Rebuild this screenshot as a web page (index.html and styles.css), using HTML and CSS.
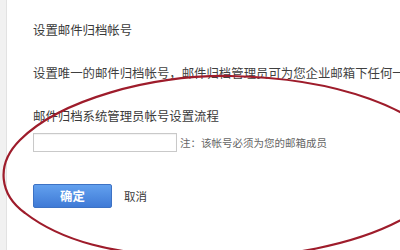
FILE: index.html
```html
<!DOCTYPE html>
<html lang="zh-CN">
<head>
<meta charset="utf-8">
<title>设置邮件归档帐号</title>
<link rel="stylesheet" href="styles.css">
</head>
<body>
<div class="page">
  <div class="rail"></div>
  <main class="content">
    <h2 class="title">设置邮件归档帐号</h2>
    <p class="desc">设置唯一的邮件归档帐号，邮件归档管理员可为您企业邮箱下任何一个成员设置归档</p>
    <h3 class="section">邮件归档系统管理员帐号设置流程</h3>
    <div class="field">
      <input class="account" type="text">
      <span class="note">注：该帐号必须为您的邮箱成员</span>
    </div>
    <div class="actions">
      <button class="btn-primary" type="button">确定</button>
      <a class="cancel" href="#">取消</a>
    </div>
  </main>
</div>
<svg class="annotation" width="400" height="250" viewBox="0 0 400 250">
  <path d="M 445,150 C 420,110 340,78 230,76 C 150,75 60,100 20,140 C -5,165 0,195 25,213 C 60,240 110,255 200,258 C 280,260 360,245 410,215 C 450,190 460,165 445,150 Z" fill="none" stroke="#9e1c2b" stroke-width="2.2" stroke-linecap="round"/>
</svg>
</body>
</html>
```

FILE: styles.css
```css
html, body {
  margin: 0;
  padding: 0;
  background: #ffffff;
}
body {
  width: 400px;
  height: 250px;
  overflow: hidden;
  position: relative;
  font-family: "Noto Sans CJK SC", "Noto Sans", sans-serif;
  color: #3a3a3a;
}
.page {
  display: flex;
  height: 250px;
}
.rail {
  width: 6px;
  flex: none;
  background: #f1f1f1;
  border-right: 1px solid #e2e2e2;
}
.content {
  flex: 1;
  min-width: 0;
  overflow: hidden;
  padding-left: 26px;
}
.title, .desc, .section {
  margin: 0;
  font-size: 12.4px;
  font-weight: normal;
  line-height: 16px;
  white-space: nowrap;
}
.title {
  margin-top: 22px;
  color: #3a3a3a;
}
.desc {
  margin-top: 27px;
  color: #3f3f3f;
}
.section {
  margin-top: 27px;
  color: #3a3a3a;
}
.field {
  display: flex;
  align-items: center;
  margin-top: 9px;
  gap: 3px;
}
.account {
  box-sizing: border-box;
  width: 144px;
  height: 19px;
  margin: 0;
  padding: 0 4px;
  border: 1px solid #c9c9c9;
  background: #fff;
  box-shadow: inset 0 1px 1px rgba(0,0,0,0.05);
}
.note {
  font-size: 10.5px;
  line-height: 14px;
  color: #666;
  white-space: nowrap;
}
.actions {
  display: flex;
  align-items: center;
  margin-top: 32px;
  gap: 12px;
}
.btn-primary {
  box-sizing: border-box;
  width: 79px;
  height: 24px;
  margin: 0;
  padding: 0;
  border: 1px solid #3d72c4;
  border-radius: 2px;
  background: linear-gradient(#62a0ee, #3f7ad6);
  color: #ffffff;
  font-family: "Noto Sans CJK SC", sans-serif;
  font-size: 12.4px;
  font-weight: bold;
  line-height: 22px;
}
.cancel {
  font-size: 11.5px;
  line-height: 14px;
  color: #3a3a3a;
  text-decoration: none;
}
.annotation {
  position: absolute;
  left: 0;
  top: 0;
  pointer-events: none;
}
```
